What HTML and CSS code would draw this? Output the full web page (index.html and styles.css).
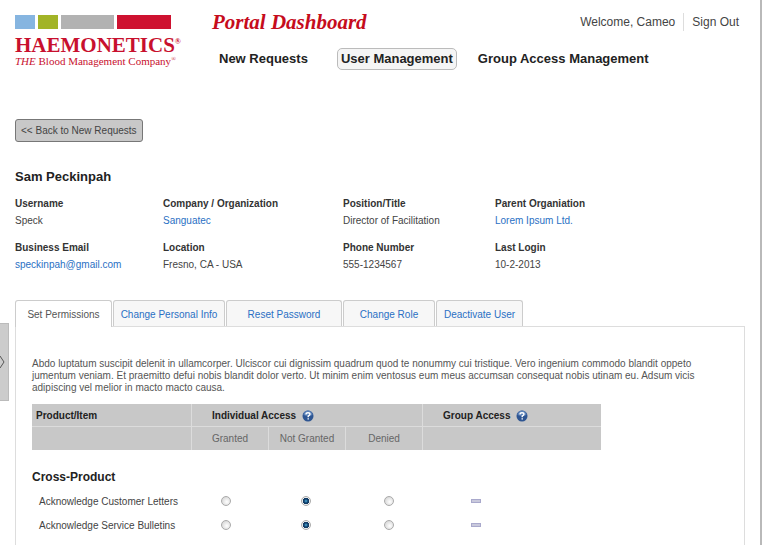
FILE: index.html
```html
<!DOCTYPE html>
<html lang="en">
<head>
<meta charset="utf-8">
<title>Portal Dashboard</title>
<link rel="stylesheet" href="styles.css">
</head>
<body>
<button class="drawer" type="button" aria-label="Open side panel">
  <svg width="6" height="14" viewBox="0 0 6 14"><path d="M0 1 L4 7 L0 13" fill="none" stroke="#555" stroke-width="1"/></svg>
</button>
<div class="page">
  <header class="header">
    <div class="logo">
      <div class="bars"><span class="bar blue"></span><span class="bar green"></span><span class="bar gray"></span><span class="bar red"></span></div>
      <div class="brand">HAEMONETICS<sup>®</sup></div>
      <div class="tagline"><i>THE</i> Blood Management Company<sup>®</sup></div>
    </div>
    <div class="masthead">
      <div class="top">
        <h1 class="title">Portal Dashboard</h1>
        <div class="account"><span class="welcome">Welcome, Cameo</span><a class="signout" href="#">Sign Out</a></div>
      </div>
      <nav class="nav">
        <a href="#">New Requests</a>
        <a class="current" href="#">User Management</a>
        <a href="#">Group Access Management</a>
      </nav>
    </div>
  </header>
  <main class="main">
    <button class="back" type="button">&lt;&lt; Back to New Requests</button>
    <h2 class="name">Sam Peckinpah</h2>
    <dl class="profile">
      <div><dt>Username</dt><dd>Speck</dd></div>
      <div><dt>Company / Organization</dt><dd><a href="#">Sanguatec</a></dd></div>
      <div><dt>Position/Title</dt><dd>Director of Facilitation</dd></div>
      <div><dt>Parent Organiation</dt><dd><a href="#">Lorem Ipsum Ltd.</a></dd></div>
      <div><dt>Business Email</dt><dd><a href="#">speckinpah@gmail.com</a></dd></div>
      <div><dt>Location</dt><dd>Fresno, CA - USA</dd></div>
      <div><dt>Phone Number</dt><dd>555-1234567</dd></div>
      <div><dt>Last Login</dt><dd>10-2-2013</dd></div>
    </dl>
    <div class="tabs" role="tablist">
      <button class="tab active" type="button" role="tab" aria-selected="true">Set Permissions</button>
      <button class="tab" type="button" role="tab">Change Personal Info</button>
      <button class="tab" type="button" role="tab">Reset Password</button>
      <button class="tab" type="button" role="tab">Change Role</button>
      <button class="tab" type="button" role="tab">Deactivate User</button>
    </div>
    <section class="panel">
      <p class="intro">Abdo luptatum suscipit delenit in ullamcorper. Ulciscor cui dignissim quadrum quod te nonummy cui tristique. Vero ingenium commodo blandit oppeto jumentum veniam. Et praemitto defui nobis blandit dolor verto. Ut minim enim ventosus eum meus accumsan consequat nobis utinam eu. Adsum vicis adipiscing vel melior in macto macto causa.</p>
      <table class="permissions">
        <colgroup><col class="c-item"><col class="c-access"><col class="c-access"><col class="c-access"><col></colgroup>
        <thead>
          <tr class="groups">
            <th>Product/Item</th>
            <th class="inset" colspan="3">Individual Access
              <svg class="help" width="12" height="12" viewBox="0 0 12 12"><circle cx="6" cy="6" r="5.5" fill="#2d5592"/><path d="M1.5 5 A4.5 4.5 0 0 1 10.5 5 Q6 7 1.5 5Z" fill="#5b82b8"/><path d="M4 4.5 Q4 2.8 6 2.8 Q8 2.8 8 4.3 Q8 5.3 6.2 6.2 V7.2 M6.2 8.2 V9.5" fill="none" stroke="#fff" stroke-width="1.4"/></svg></th>
            <th class="inset">Group Access
              <svg class="help" width="12" height="12" viewBox="0 0 12 12"><circle cx="6" cy="6" r="5.5" fill="#2d5592"/><path d="M1.5 5 A4.5 4.5 0 0 1 10.5 5 Q6 7 1.5 5Z" fill="#5b82b8"/><path d="M4 4.5 Q4 2.8 6 2.8 Q8 2.8 8 4.3 Q8 5.3 6.2 6.2 V7.2 M6.2 8.2 V9.5" fill="none" stroke="#fff" stroke-width="1.4"/></svg></th>
          </tr>
          <tr class="levels"><td></td><th>Granted</th><th>Not Granted</th><th>Denied</th><td></td></tr>
        </thead>
        <tbody>
          <tr class="section"><th colspan="5">Cross-Product</th></tr>
          <tr>
            <th class="item">Acknowledge Customer Letters</th>
            <td class="granted"><input type="radio" name="letters" aria-label="Granted"></td>
            <td class="not-granted"><input type="radio" name="letters" aria-label="Not Granted" checked></td>
            <td class="denied"><input type="radio" name="letters" aria-label="Denied"></td>
            <td class="group"><span class="dash"></span></td>
          </tr>
          <tr>
            <th class="item">Acknowledge Service Bulletins</th>
            <td class="granted"><input type="radio" name="bulletins" aria-label="Granted"></td>
            <td class="not-granted"><input type="radio" name="bulletins" aria-label="Not Granted" checked></td>
            <td class="denied"><input type="radio" name="bulletins" aria-label="Denied"></td>
            <td class="group"><span class="dash"></span></td>
          </tr>
        </tbody>
      </table>
    </section>
  </main>
</div>
</body>
</html>
```
FILE: styles.css
```css
* { box-sizing: border-box; }
html { overflow: hidden; }
body {
  margin: 0;
  background: #fff;
  color: #444;
  font: 10px/17px "Liberation Sans", Arial, sans-serif;
}
button { font: inherit; color: inherit; margin: 0; cursor: pointer; }
a { color: #2a70c4; text-decoration: none; }
h1, h2, p, dl, dd { margin: 0; }

.page {
  min-height: 100vh;
  margin-right: 16px;
  padding: 0 15px;
  border-right: 2px solid #b9b9b9;
}
.drawer {
  position: absolute;
  left: 0;
  top: 323px;
  width: 9px;
  height: 78px;
  padding: 0;
  border: 1px solid #bbb;
  border-left: 0;
  background: #ccc;
}
.drawer svg { display: block; }

.header { display: flex; padding-top: 10px; }
.logo {
  width: 197px;
  padding-top: 5px;
  color: #c8102e;
  font-family: "Liberation Serif", "Times New Roman", serif;
  white-space: nowrap;
}
.bars { display: flex; gap: 3px; }
.bar { width: 20px; height: 14px; }
.blue { background: #86b5e0; }
.green { background: #a2b427; }
.gray { width: 53px; background: #b2b2b2; }
.red { width: 54px; background: #ce1230; }
.brand { margin-top: 6px; font-size: 21px; font-weight: bold; line-height: 20px; }
.tagline { font-size: 11px; line-height: 12px; }
.logo sup { font-size: 8px; line-height: 0; vertical-align: 8px; }
.logo .tagline sup { font-size: 6px; vertical-align: 4px; }

.masthead { flex: 1; }
.top { display: flex; justify-content: space-between; }
.title {
  color: #c60c1c;
  font: italic bold 21px/24px "Liberation Serif", "Times New Roman", serif;
}
.account { display: flex; align-items: center; margin-right: 6px; font-size: 12px; line-height: 18px; }
.welcome { padding-right: 8px; border-right: 1px solid #ddd; }
.signout { padding-left: 8px; color: #444; }
.nav { display: flex; gap: 18px; margin-top: 14px; padding-left: 4px; }
.nav a {
  padding: 0 2px;
  border: 1px solid transparent;
  border-radius: 5px;
  color: #222;
  font-size: 13px;
  font-weight: bold;
  line-height: 20px;
  white-space: nowrap;
}
.nav .current { margin-left: 8px; padding: 0 3px; border-color: #bbb; background: #f5f5f5; }

.back {
  display: block;
  margin-top: 49px;
  padding: 2px 5px;
  border: 1px solid #777;
  border-radius: 3px;
  background: #c8c8c8;
  line-height: 17px;
}
.name { margin-top: 26px; color: #222; font-size: 13px; line-height: 17px; }
.profile {
  display: grid;
  grid-template-columns: 148px 180px 152px 1fr;
  gap: 10px 0;
  margin-top: 10px;
}
.profile dt { color: #333; font-weight: bold; }

.tabs {
  display: grid;
  grid-template-columns: 97px 112px 116px 92px 87px;
  gap: 1px;
  margin-top: 27px;
}
.tab {
  height: 26px;
  padding: 2px 0 0;
  border: 1px solid #ccc;
  border-bottom: 0;
  border-radius: 3px 3px 0 0;
  background: #f7f7f7;
  color: #2a70c4;
}
.tab.active { position: relative; height: 27px; margin-bottom: -1px; padding: 0; background: #fff; color: #555; }
.panel { min-height: 240px; padding: 31px 16px 0; border: 1px solid #ddd; }
.intro { max-width: 676px; color: #555; line-height: 12px; }

.permissions {
  width: 100%;
  max-width: 569px;
  margin-top: 10px;
  table-layout: fixed;
  border-collapse: separate;
  border-spacing: 0;
}
.c-item { width: 160px; }
.c-access { width: 77px; }
th, td { padding: 0; text-align: left; font-weight: normal; vertical-align: middle; }
thead th, thead td { height: 23px; border-right: 1px solid #dcdcdc; background: #c8c8c8; }
thead th:last-child, thead td:last-child { border-right: 0; }
.groups th { padding-left: 4px; border-bottom: 1px solid #dcdcdc; color: #222; font-weight: bold; }
.groups .inset { padding-left: 20px; }
.help { margin-left: 3px; vertical-align: -3px; }
.levels th { color: #666; text-align: center; }
.section th { height: 39px; padding-top: 15px; color: #222; font-size: 12px; font-weight: bold; }
tbody td, tbody .item { height: 24px; }
.item { padding-left: 7px; white-space: nowrap; }
.granted { padding-left: 29px; }
.not-granted { padding-left: 32px; }
.denied { padding-left: 38px; }
.group { padding-left: 48px; }
input[type="radio"] {
  appearance: none;
  display: block;
  width: 10px;
  height: 10px;
  margin: 0;
  border: 1px solid #aaa;
  border-radius: 50%;
  background: radial-gradient(circle at 60% 60%, #fff, #ccc);
}
input[type="radio"]:checked { background: radial-gradient(circle, #4ab0e0 0, #123c66 2px, #123c66 3px, #f0f0f0 3px); }
.dash { display: block; width: 10px; height: 4px; border: 1px solid #a9a9cc; background: #c9c9dc; }
```
